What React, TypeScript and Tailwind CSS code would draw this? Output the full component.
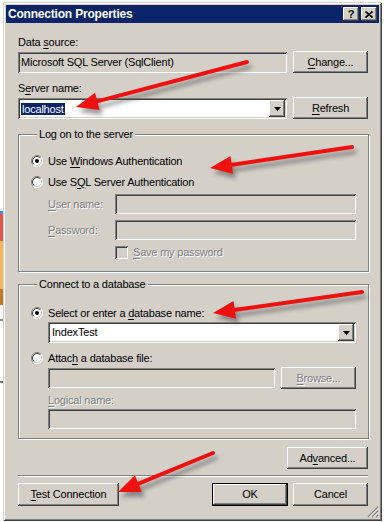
import React from 'react'

const RAISED =
  'shadow-[inset_-1px_-1px_#404040,inset_1px_1px_#ffffff,inset_-2px_-2px_#808080,inset_2px_2px_#d4d0c8]'
const SUNKEN =
  'shadow-[inset_1px_1px_#808080,inset_-1px_-1px_#ffffff,inset_2px_2px_#404040,inset_-2px_-2px_#d4d0c8]'
const DIM = 'text-[#808080] [text-shadow:1px_1px_0_#ffffff]'

const ARROWS: [number, number, number, number][] = [
  [247, 62, 76, 107],
  [352, 147, 210, 168],
  [362, 292, 213, 313],
  [213, 453, 118, 492],
]

function Key({ children }: { children: React.ReactNode }) {
  return <span className="underline underline-offset-[2px]">{children}</span>
}

function Button({
  children,
  className = '',
  disabled = false,
}: {
  children: React.ReactNode
  className?: string
  disabled?: boolean
}) {
  return (
    <div
      className={`flex items-center justify-center bg-[#d4d0c8] ${RAISED} ${disabled ? DIM : 'text-black'} ${className}`}
    >
      <span>{children}</span>
    </div>
  )
}

function Field({
  children,
  className = '',
  white = false,
}: {
  children?: React.ReactNode
  className?: string
  white?: boolean
}) {
  return (
    <div
      className={`flex items-center pl-[3px] ${SUNKEN} ${white ? 'bg-white' : 'bg-[#d4d0c8]'} ${className}`}
    >
      {children}
    </div>
  )
}

function Combo({ children, className = '' }: { children: React.ReactNode; className?: string }) {
  return (
    <div className={`flex items-stretch bg-white p-[2px] ${SUNKEN} ${className}`}>
      <div className="flex flex-1 items-center pl-[1px]">{children}</div>
      <div className={`flex w-[16px] items-center justify-center bg-[#d4d0c8] ${RAISED}`}>
        <svg width="7" height="4" viewBox="0 0 7 4">
          <path d="M0 0H7L3.5 4Z" fill="#000" />
        </svg>
      </div>
    </div>
  )
}

function Radio({ checked = false }: { checked?: boolean }) {
  return (
    <svg width="12" height="12" viewBox="0 0 12 12" className="shrink-0">
      <circle cx="6" cy="6" r="5" fill="#fff" />
      <path d="M2.11 9.89A5.5 5.5 0 0 1 9.89 2.11" fill="none" stroke="#808080" />
      <path d="M9.89 2.11A5.5 5.5 0 0 1 2.11 9.89" fill="none" stroke="#fff" />
      <path d="M2.82 9.18A4.5 4.5 0 0 1 9.18 2.82" fill="none" stroke="#404040" />
      <path d="M9.18 2.82A4.5 4.5 0 0 1 2.82 9.18" fill="none" stroke="#d4d0c8" />
      {checked && <circle cx="6" cy="6" r="2" fill="#000" />}
    </svg>
  )
}

function Group({
  title,
  className = '',
  children,
}: {
  title: string
  className?: string
  children: React.ReactNode
}) {
  return (
    <fieldset
      className={`w-[351px] border border-[#808080] pl-[12px] pr-[12px] shadow-[inset_1px_1px_#ffffff,1px_1px_#ffffff] ${className}`}
    >
      <legend className="ml-[6px] bg-[#d4d0c8] px-[2px] leading-[13px]">{title}</legend>
      {children}
    </fieldset>
  )
}

function Arrow({ a }: { a: [number, number, number, number] }) {
  const [x1, y1, x2, y2] = a
  const len = Math.hypot(x2 - x1, y2 - y1)
  const ux = (x2 - x1) / len
  const uy = (y2 - y1) / len
  const nx = -uy
  const ny = ux
  const L = 22
  const W = 9
  const bx = x2 - ux * L
  const by = y2 - uy * L
  const head = `${x2},${y2} ${bx + nx * W},${by + ny * W} ${bx - nx * W},${by - ny * W}`
  return (
    <>
      <g transform="translate(3 5)" filter="url(#blur)" opacity="0.55">
        <line x1={x1} y1={y1} x2={bx + ux * 3} y2={by + uy * 3} stroke="#505050" strokeWidth="4" strokeLinecap="round" />
        <polygon points={head} fill="#505050" />
      </g>
      <line x1={x1} y1={y1} x2={bx + ux * 3} y2={by + uy * 3} stroke="#f01010" strokeWidth="4" strokeLinecap="round" />
      <polygon points={head} fill="#f01010" />
    </>
  )
}

export default function App() {
  return (
    <div className="relative flex h-[522px] w-[384px] overflow-hidden bg-white font-['Liberation_Sans',Arial,sans-serif] text-[11px] leading-[13px] tracking-[-0.2px] text-black">
      {/* what is behind the window */}
      <div className="flex w-[3px] flex-col">
        <div className="h-[211px]" />
        <div className="h-[3px] bg-[#4a8fd6]" />
        <div className="h-[27px] bg-[#e0554f]" />
        <div className="h-[48px] bg-[#f4b45c]" />
        <div className="h-[16px] bg-[#c07a2a]" />
        <div className="mt-[14px] h-[2px] bg-[#9a9a9a]" />
        <div className="mt-[60px] h-[2px] bg-[#707070]" />
      </div>

      {/* window */}
      <div className="mt-[2px] flex h-[519px] w-[379px] flex-col bg-[#d4d0c8] p-[3px] shadow-[inset_1px_1px_#d4d0c8,inset_-1px_-1px_#404040,inset_2px_2px_#ffffff,inset_-2px_-2px_#808080]">
        <div className="flex h-[18px] items-center justify-between bg-[#0a246a] pl-[2px] pr-[2px]">
          <span className="text-[12px] font-bold tracking-[-0.2px] text-white">Connection Properties</span>
          <div className="flex gap-[2px]">
            <div className={`flex h-[14px] w-[16px] items-center justify-center bg-[#d4d0c8] ${RAISED}`}>
              <span className="text-[11px] font-bold leading-[11px]">?</span>
            </div>
            <div className={`flex h-[14px] w-[16px] items-center justify-center bg-[#d4d0c8] ${RAISED}`}>
              <svg width="8" height="7" viewBox="0 0 8 7">
                <path d="M0.5 0.5L7.5 6.5M7.5 0.5L0.5 6.5" stroke="#000" strokeWidth="1.6" />
              </svg>
            </div>
          </div>
        </div>

        <div className="relative flex flex-1 flex-col pl-[12px] pr-[11px]">
          <div className="mt-[13px] h-[13px]">
            Data <Key>s</Key>ource:
          </div>
          <div className="mt-[2px] flex h-[22px] items-end justify-between">
            <Field className="h-[21px] w-[269px]">Microsoft SQL Server (SqlClient)</Field>
            <Button className="h-[22px] w-[75px]">
              <Key>C</Key>hange...
            </Button>
          </div>

          <div className="mt-[9px] h-[13px]">
            S<Key>e</Key>rver name:
          </div>
          <div className="mt-[2px] flex h-[22px] items-end justify-between">
            <Combo className="h-[21px] w-[269px]">
              <span className="bg-[#0a246a] px-[1px] leading-[12px] text-white">localhost</span>
            </Combo>
            <Button className="h-[22px] w-[75px]">
              <Key>R</Key>efresh
            </Button>
          </div>

          <Group title="Log on to the server" className="mt-[9px] pb-[12px]">
            <div className="mt-[13px] flex h-[14px] items-center gap-[5px]">
              <Radio checked />
              <span>
                Use <Key>W</Key>indows Authentication
              </span>
            </div>
            <div className="mt-[7px] flex h-[14px] items-center gap-[5px]">
              <Radio />
              <span>
                Use S<Key>Q</Key>L Server Authentication
              </span>
            </div>
            <div className="mt-[5px] flex h-[20px] items-center pl-[17px]">
              <span className={`w-[67px] ${DIM}`}>
                <Key>U</Key>ser name:
              </span>
              <Field className="h-[20px] w-[241px]" />
            </div>
            <div className="mt-[6px] flex h-[20px] items-center pl-[17px]">
              <span className={`w-[67px] ${DIM}`}>
                <Key>P</Key>assword:
              </span>
              <Field className="h-[20px] w-[241px]" />
            </div>
            <div className="mt-[6px] flex h-[13px] items-center gap-[5px] pl-[84px]">
              <div className={`h-[13px] w-[13px] bg-[#d4d0c8] ${SUNKEN}`} />
              <span className={DIM}>
                <Key>S</Key>ave my password
              </span>
            </div>
          </Group>

          <Group title="Connect to a database" className="mt-[6px] pb-[9px]">
            <div className="mt-[15px] flex h-[14px] items-center gap-[5px]">
              <Radio checked />
              <span>
                Select or enter a <Key>d</Key>atabase name:
              </span>
            </div>
            <Combo className="ml-[17px] mt-[2px] h-[21px] w-[308px]">
              <span className="pl-[1px]">IndexTest</span>
            </Combo>
            <div className="mt-[8px] flex h-[14px] items-center gap-[5px]">
              <Radio />
              <span>
                Attac<Key>h</Key> a database file:
              </span>
            </div>
            <div className="ml-[17px] mt-[2px] flex h-[22px] w-[308px] items-center justify-between">
              <Field className="h-[20px] w-[227px]" />
              <Button disabled className="h-[22px] w-[75px]">
                <Key>B</Key>rowse...
              </Button>
            </div>
            <div className={`ml-[17px] mt-[5px] h-[13px] ${DIM}`}>
              <Key>L</Key>ogical name:
            </div>
            <Field className="ml-[17px] mt-[2px] h-[20px] w-[308px]" />
          </Group>

          <Button className="mt-[8px] h-[22px] w-[81px] self-end">
            Ad<Key>v</Key>anced...
          </Button>

          <div className="mt-[6px] h-[2px] border-t border-b border-t-[#808080] border-b-white" />

          <div className="mt-[6px] flex h-[23px] items-stretch justify-between">
            <Button className="w-[101px]">
              <Key>T</Key>est Connection
            </Button>
            <div className="flex gap-[5px]">
              <div className="flex w-[76px] border border-black">
                <Button className="flex-1">OK</Button>
              </div>
              <Button className="w-[75px]">Cancel</Button>
            </div>
          </div>

          <svg width="12" height="12" viewBox="0 0 12 12" className="absolute bottom-0 right-0">
            <path d="M11 1L1 11M11 5L5 11M11 9L9 11" stroke="#808080" strokeWidth="1.4" />
            <path d="M11 2.5L2.5 11M11 6.5L6.5 11M11 10.5L10.5 11" stroke="#ffffff" strokeWidth="1" />
          </svg>
        </div>
      </div>

      {/* red annotation arrows on top of the screenshot */}
      <svg width="384" height="522" className="pointer-events-none absolute left-0 top-0">
        <defs>
          <filter id="blur" x="-20%" y="-20%" width="140%" height="140%">
            <feGaussianBlur stdDeviation="2" />
          </filter>
        </defs>
        {ARROWS.map((a, i) => (
          <Arrow key={i} a={a} />
        ))}
      </svg>
    </div>
  )
}
